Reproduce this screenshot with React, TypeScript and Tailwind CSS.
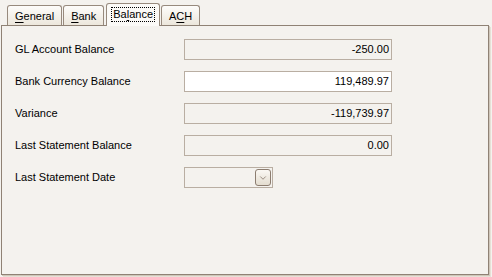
import { ChevronDown } from 'lucide-react';

function Tab({ label, active }: { label: [string, string, string]; active?: boolean }) {
  const [a, u, b] = label;
  if (active) {
    return (
      <div className="relative z-10 -mb-px ml-[1px] flex h-[23px] items-start rounded-t-[3px] border border-b-0 border-[#978a7d] bg-[#fbfaf7] px-[4px] pt-[3px]">
        <span className="border border-dotted border-black px-[1px] leading-[13px]">
          {a}
          <span className="underline underline-offset-2">{u}</span>
          {b}
        </span>
      </div>
    );
  }
  return (
    <div className="flex h-[20px] items-start rounded-t-[3px] border border-b-0 border-[#978a7d] bg-gradient-to-b from-[#fdfcfa] to-[#ece7dc] px-[7px] pt-[4px] leading-[13px]">
      <span>
        {a}
        <span className="underline underline-offset-2">{u}</span>
        {b}
      </span>
    </div>
  );
}

function Row({ label, children }: { label: string; children: React.ReactNode }) {
  return (
    <div className="flex h-[21px] items-center">
      <div className="w-[169px] pb-[1px]">{label}</div>
      {children}
    </div>
  );
}

function Field({ value, editable }: { value: string; editable?: boolean }) {
  return (
    <div
      className={`flex h-[21px] w-[208px] items-center justify-end border border-[#b9aea2] pr-[2px] ${
        editable ? 'bg-white' : 'bg-[#f4f2ee]'
      }`}
    >
      {value}
    </div>
  );
}

export default function App() {
  return (
    <div
      className="h-[277px] w-[492px] bg-[#f4f2ee] text-[11px] text-black"
      style={{ fontFamily: '"Liberation Sans", Arial, sans-serif' }}
    >
      <div className="flex h-[25px] items-end gap-[1px] pl-[7px]">
        <Tab label={['', 'G', 'eneral']} />
        <Tab label={['', 'B', 'ank']} />
        <Tab label={['Ba', 'l', 'ance']} active />
        <Tab label={['A', 'C', 'H']} />
      </div>
      <div className="ml-[1px] flex h-[250px] w-[488px] flex-col gap-[11px] border border-[#8f8275] bg-[#f4f2ee] pl-[13px] pt-[13px] shadow-[1px_1px_0_#cfc6b9,2px_2px_0_#e6e0d6]">
        <Row label="GL Account Balance">
          <Field value="-250.00" />
        </Row>
        <Row label="Bank Currency Balance">
          <Field value="119,489.97" editable />
        </Row>
        <Row label="Variance">
          <Field value="-119,739.97" />
        </Row>
        <Row label="Last Statement Balance">
          <Field value="0.00" />
        </Row>
        <Row label="Last Statement Date">
          <div className="flex h-[21px] w-[89px] items-center justify-end border border-[#b9aea2] bg-[#f4f2ee] pr-[1px]">
            <div className="flex h-[17px] w-[16px] items-center justify-center rounded-[3px] border border-[#8c7d70] bg-gradient-to-b from-[#faf8f3] to-[#e4ddd0]">
              <ChevronDown size={10} strokeWidth={1.75} className="text-[#7a6c5f]" />
            </div>
          </div>
        </Row>
      </div>
    </div>
  );
}
